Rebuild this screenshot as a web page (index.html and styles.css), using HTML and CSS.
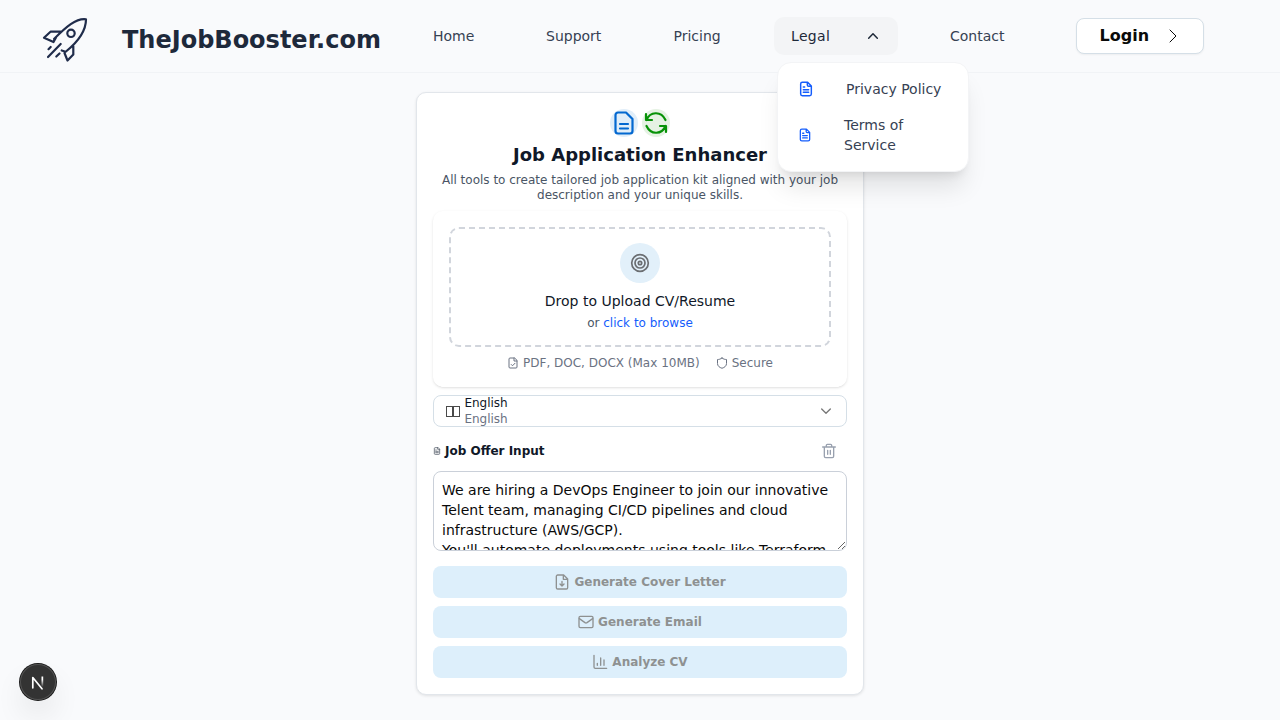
FILE: index.html
```html
<!DOCTYPE html>
<html lang="en">
<head>
<meta charset="utf-8">
<title>TheJobBooster.com</title>
<link rel="stylesheet" href="styles.css">
</head>
<body>
<svg class="defs" aria-hidden="true">
  <symbol id="doc" viewBox="0 0 24 24"><path d="M14.500 2H6.500A2.500 2.500 0 0 0 4 4.500V19.500A2.500 2.500 0 0 0 6.500 22H17.500A2.500 2.500 0 0 0 20 19.500V7.500zM14 2v4a2 2 0 0 0 2 2h4M8 9h2M8 13h8M8 17h8"/></symbol>
</svg>
<header class="header">
  <a class="brand">
    <svg class="rocket" viewBox="0 0 48 48"><path d="M44 3.300C34 2 24 11 12 23M24 35.500C37 25 44 15 44 3.300M18.500 15.700H8.500L2 21.700 11.500 26 14 21.500M31.300 29.700V38.500L25.500 44.500 22.500 37M23.500 35.700L19.700 34.500M8.700 31l-2.200 2.200M18.700 28L6 41M17.500 37.500l-3.200 3"/><circle cx="29" cy="17.300" r="3.700"/></svg>
    <span class="brand-name">TheJobBooster.com</span>
  </a>
  <nav class="nav">
    <a class="home">Home</a>
    <a class="support">Support</a>
    <a class="pricing">Pricing</a>
    <div class="legal">
      <button class="legal-button">Legal<svg class="icon16" viewBox="0 0 24 24"><path d="m5.500 15.500 6.500-7 6.500 7"/></svg></button>
      <div class="menu">
        <a class="menu-item"><svg class="icon16" viewBox="0 0 24 24"><use href="#doc"/></svg><span>Privacy Policy</span></a>
        <a class="menu-item terms"><svg class="icon14" viewBox="0 0 24 24"><use href="#doc"/></svg><span>Terms of Service</span></a>
      </div>
    </div>
    <a class="contact">Contact</a>
  </nav>
  <button class="login">Login<svg viewBox="0 0 16 16"><path d="m5 2 6 6-6 6"/></svg></button>
</header>
<main class="card">
  <div class="hero-icons">
    <span class="halo blue"><svg viewBox="0 0 24 24"><path d="M14 1.500H6A2.500 2.500 0 0 0 3.500 4V20A2.500 2.500 0 0 0 6 22.500H18A2.500 2.500 0 0 0 20.500 20V8zM8 13h8M8 17.500h8"/></svg></span>
    <span class="halo green"><svg viewBox="0 0 24 24"><path d="M2 3v6h6M22 21v-6h-6M2.500 9C6 .500 17-.500 21.500 9M21.500 15C18 23.500 7 24.500 2.500 15"/></svg></span>
  </div>
  <h1>Job Application Enhancer</h1>
  <p class="intro">All tools to create tailored job application kit aligned with your job description and your unique skills.</p>
  <section class="upload">
    <div class="drop">
      <span class="target"><svg viewBox="0 0 20 20"><circle cx="10" cy="10" r="8.300"/><circle cx="10" cy="10" r="5"/><circle cx="10" cy="10" r="1.700"/></svg></span>
      <div class="drop-title">Drop to Upload CV/Resume</div>
      <div class="drop-sub">or <a>click to browse</a></div>
    </div>
    <div class="facts">
      <span><svg viewBox="0 0 24 24"><path d="M14.500 2H6a2 2 0 0 0-2 2v16a2 2 0 0 0 2 2h12a2 2 0 0 0 2-2V7.500zM14 2v6h6M8.500 15l2.500 2.500 5-5"/></svg>PDF, DOC, DOCX (Max 10MB)</span>
      <span><svg viewBox="0 0 24 24"><path d="M12 2C9 4.500 6 5 3 5v8c0 5 4 8 9 9.500 5-1.500 9-4.500 9-9.500V5c-3 0-6-.500-9-3z"/></svg>Secure</span>
    </div>
  </section>
  <div class="select">
    <span class="flag"><i></i><i></i></span>
    <span class="lang"><span>English</span><span class="native">English</span></span>
    <svg class="icon16" viewBox="0 0 24 24"><path d="m5.500 9 6.500 6.500L18.500 9"/></svg>
  </div>
  <div class="offer-head">
    <svg class="tiny" viewBox="0 0 24 24"><use href="#doc"/></svg>
    <span>Job Offer Input</span>
    <svg class="trash" viewBox="0 0 24 24"><path d="M2.500 6h19M19 6v14a2 2 0 0 1-2 2H7a2 2 0 0 1-2-2V6M8 6V3.500A1.500 1.500 0 0 1 9.500 2h5A1.500 1.500 0 0 1 16 3.500V6M10 11v6M14 11v6"/></svg>
  </div>
  <textarea class="offer">We are hiring a DevOps Engineer to join our innovative Telent team, managing CI/CD pipelines and cloud infrastructure (AWS/GCP).
You'll automate deployments using tools like Terraform and Kubernetes.</textarea>
  <div class="actions">
    <button><svg viewBox="0 0 24 24"><path d="M14.500 1.500H5.500a2 2 0 0 0-2 2v17a2 2 0 0 0 2 2h13a2 2 0 0 0 2-2V7.500zM14 2v6h6M12 11v7M9 15l3 3 3-3"/></svg>Generate Cover Letter</button>
    <button><svg viewBox="0 0 24 24"><rect x="1.500" y="3.500" width="21" height="17" rx="2"/><path d="m2 7 8.500 6q1.500 1 3 0L22 7"/></svg>Generate Email</button>
    <button><svg viewBox="0 0 24 24"><path d="M3 2v17.500a2 2 0 0 0 2 2h17M8 17v-3M13 17V6M18 17V9"/></svg>Analyze CV</button>
  </div>
</main>
<div class="dev"><svg viewBox="0 0 36 36"><defs><linearGradient id="fadeDown" x1="0" y1="0" x2="0" y2="1"><stop offset=".3" stop-color="#fff"/><stop offset="1" stop-color="#fff" stop-opacity="0"/></linearGradient></defs><path d="M12.800 23.800V13.500L22 24.800" fill="none" stroke="#fff" stroke-width="1.700"/><rect x="21.500" y="12.500" width="1.700" height="10.500" fill="url(#fadeDown)"/></svg></div>
</body>
</html>
```
FILE: styles.css
```css
* { box-sizing: border-box; }
body { margin: 0; height: 720px; overflow: hidden; background: #f9fafc; color: #101828; font-family: "DejaVu Sans", sans-serif; font-size: 14px; line-height: 20px; }
button { font: inherit; }
svg { fill: none; stroke: currentColor; stroke-width: 2; stroke-linecap: round; stroke-linejoin: round; flex-shrink: 0; }
.defs { display: none; }
.icon16 { width: 16px; height: 16px; }
.icon14 { width: 14px; height: 14px; }

.header { display: flex; height: 73px; border-bottom: 1px solid #f1f3f6; }
.brand { display: flex; width: 433px; padding-left: 42px; color: #1e293b; }
.rocket { width: 48px; height: 48px; margin-top: 16px; stroke: #202c4b; stroke-width: 2.200; }
.brand-name { margin: 24px 0 0 32px; font-size: 24px; line-height: 32px; font-weight: 700; }
.nav { display: grid; grid-template-columns: 113px 127.500px 100.500px 124px 126px; width: 643px; height: 72px; align-items: center; color: #364153; }
.legal { position: relative; }
.legal-button { display: flex; justify-content: space-between; align-items: center; width: 124px; height: 38px; padding: 0 17px; border: 0; border-radius: 10px; background: #f3f4f6; color: #1e2939; letter-spacing: .35px; }
.legal-button svg { stroke-width: 2.200; }
.contact { padding-left: 52px; }
.menu { position: absolute; z-index: 2; top: 45px; left: 3px; width: 192px; height: 110px; padding: 8px 1px; border: 1px solid #f3f4f6; border-radius: 14px; background: #fff; box-shadow: 0 20px 25px -5px #0000001a, 0 8px 10px -6px #0000001a; }
.menu-item { display: flex; align-items: center; height: 36px; padding-left: 19px; gap: 32px; }
.menu-item svg { color: #155dfc; stroke-width: 2.200; }
.terms { height: 56px; padding-right: 36px; }
.login { display: flex; justify-content: space-between; align-items: center; width: 128px; height: 36px; margin-top: 18px; padding: 0 22px 0 22.500px; border: 1px solid #d5dfe7; border-radius: 8px; background: #fff; color: #0a0a0a; font-size: 16px; font-weight: 700; box-shadow: 0 1px 2px #0000000d; }
.login svg { width: 16px; height: 16px; stroke-width: 1; }

.card { width: 448px; height: 603px; margin: 19px auto 0; padding: 16px; border: 1px solid #e2e6eb; border-radius: 10px; background: #fff; box-shadow: 0 1px 3px #0000001a; }
.hero-icons { display: flex; justify-content: center; gap: 4px; height: 28px; }
.halo { display: grid; place-items: center; width: 28px; height: 28px; border-radius: 50%; }
.halo svg { width: 24px; height: 24px; stroke-width: 2.200; }
.blue { background: #e1eef9; color: #0368d0; }
.green { background: #e5f2e3; color: #079207; }
h1 { margin: 4px 0; text-align: center; font-size: 18px; line-height: 28px; }
.intro { margin: 0 0 8px; text-align: center; font-size: 12px; line-height: 15px; color: #4a5565; }
.upload { height: 176px; padding: 16px; border-radius: 10px; box-shadow: 0 1px 3px #0000001a, 0 1px 2px -1px #0000001a; }
.drop { display: flex; flex-direction: column; align-items: center; height: 120px; padding-top: 14px; border: 2px dashed #d1d5dc; border-radius: 10px; }
.target { display: grid; place-items: center; width: 40px; height: 40px; border-radius: 50%; background: #e2f0fa; color: #6b6e72; }
.target svg { width: 20px; height: 20px; stroke-width: 1.700; }
.drop-title { margin-top: 8px; }
.drop-sub { margin-top: 4px; font-size: 12px; line-height: 16px; color: #4a5565; }
.drop-sub a { color: #155dfc; }
.facts { display: flex; justify-content: center; gap: 16px; margin-top: 8px; color: #6a7282; font-size: 12px; line-height: 16px; }
.facts span { display: flex; align-items: center; gap: 4px; }
.facts svg { width: 12px; height: 12px; }
.select { display: flex; align-items: center; height: 32px; margin-top: 8px; padding: 0 12px; border: 1px solid #d5dfe7; border-radius: 8px; font-size: 12px; line-height: 16px; }
.flag { display: flex; margin-right: 4.400px; }
.flag i { width: 7px; height: 11px; border: 1px solid #4a4a4a; }
.lang { display: flex; flex-direction: column; flex: 1; }
.native { color: #6a7282; }
.select > svg { color: #777; }
.offer-head { display: flex; align-items: center; height: 24px; margin-top: 12px; padding-right: 10px; font-size: 12px; line-height: 16px; font-weight: 700; }
.tiny { width: 8px; height: 8px; margin-right: 4px; color: #5c6470; stroke-width: 2.500; }
.trash { width: 16px; height: 16px; margin-left: auto; color: #99a1af; }
.offer { display: block; width: 414px; height: 80px; margin: 8px 0 15px; padding: 8px; border: 1px solid #cad0d9; border-radius: 8px; outline: 0; background: #fff; color: #0a0a0a; font: inherit; overflow: hidden; resize: vertical; }
.actions { display: grid; gap: 8px; }
.actions button { display: flex; justify-content: center; align-items: center; gap: 4px; height: 32px; padding: 0; border: 0; border-radius: 8px; background: #ddeffb; color: #8e9191; font-size: 12px; font-weight: 700; }
.actions svg { width: 16px; height: 16px; }
.dev { position: fixed; left: 20px; top: 664px; width: 36px; height: 36px; border-radius: 50%; background: #333; box-shadow: 0 0 0 1px #171717, inset 0 0 0 1px #525252, 0 16px 32px -8px #0000003d; }
.dev svg { display: block; width: 36px; height: 36px; stroke: none; }
```
